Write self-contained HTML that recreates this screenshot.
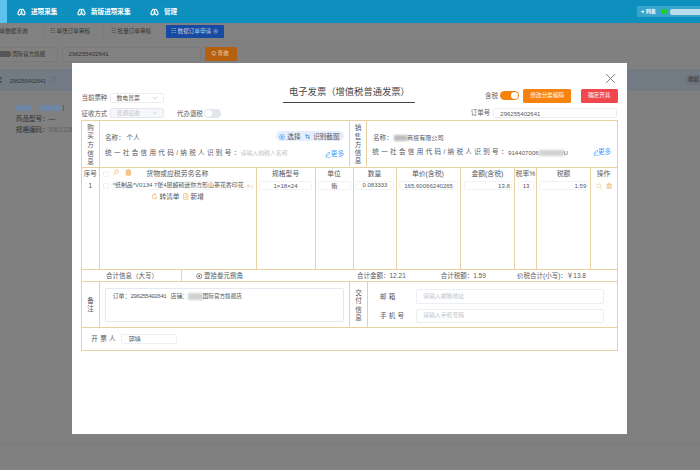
<!DOCTYPE html>
<html lang="zh-CN">
<head>
<meta charset="utf-8">
<title>电子发票</title>
<style>
html,body{margin:0;padding:0;}
body{width:700px;height:470px;overflow:hidden;position:relative;background:#fff;
 font-family:"Liberation Sans","Noto Sans CJK SC",sans-serif;color:#56585c;}
*{box-sizing:border-box;}
.a{position:absolute;}
.t{position:absolute;white-space:nowrap;line-height:1;font-size:6.6px;}
/* header */
#hd{left:0;top:0;width:700px;height:23px;background:#0e90bf;z-index:30;}
#hd .lb{left:0;top:0;width:7px;height:23px;background:#5cc3ef;}
#hd .t{color:#fff;font-weight:bold;font-size:6.6px;}
/* underlying page */
#pg{left:0;top:23px;width:700px;height:447px;background:#808080;overflow:hidden;}
#pg .t{color:#333;font-size:5.6px;}
/* modal */
#md{left:0;top:0;width:700px;height:470px;z-index:20;}
#md .w{left:72px;top:62.5px;width:555px;height:371px;background:#fff;}
.bx{position:absolute;border:1px solid #eaecf0;border-radius:1.5px;background:#fff;}
.vl{position:absolute;width:1px;background:#e7d0a2;}
.hl{position:absolute;height:1px;background:#e7d0a2;}
.v{position:absolute;width:8px;text-align:center;font-size:6.6px;line-height:8.5px;}
.ph{color:#c0c4cc;}
.bl{color:#409eff;}
</style>
</head>
<body>
<!-- ===== top header ===== -->
<div id="hd" class="a">
  <div class="a lb"></div>
  <svg class="a" style="left:17px;top:7.6px" width="9" height="8" viewBox="0 0 9 8"><path d="M2.9 1.3 Q1.3 3.6 0.9 5.2 Q0.9 6.8 2.5 6.8 Q4 6.8 4.1 5.2 L4.5 2.6 L4.9 5.2 Q5 6.8 6.5 6.8 Q8.1 6.8 8.1 5.2 Q7.7 3.6 6.1 1.3 Q5 0.9 4.5 2.4 Q4 0.9 2.9 1.3Z" fill="none" stroke="#fff" stroke-width="1.15" stroke-linejoin="round"/></svg>
  <span class="t" style="left:31px;top:8.9px">进项采集</span>
  <svg class="a" style="left:77px;top:7.6px" width="9" height="8" viewBox="0 0 9 8"><path d="M2.9 1.3 Q1.3 3.6 0.9 5.2 Q0.9 6.8 2.5 6.8 Q4 6.8 4.1 5.2 L4.5 2.6 L4.9 5.2 Q5 6.8 6.5 6.8 Q8.1 6.8 8.1 5.2 Q7.7 3.6 6.1 1.3 Q5 0.9 4.5 2.4 Q4 0.9 2.9 1.3Z" fill="none" stroke="#fff" stroke-width="1.15" stroke-linejoin="round"/></svg>
  <span class="t" style="left:91px;top:8.9px">新版进项采集</span>
  <svg class="a" style="left:149.5px;top:7.6px" width="9" height="8" viewBox="0 0 9 8"><path d="M2.9 1.3 Q1.3 3.6 0.9 5.2 Q0.9 6.8 2.5 6.8 Q4 6.8 4.1 5.2 L4.5 2.6 L4.9 5.2 Q5 6.8 6.5 6.8 Q8.1 6.8 8.1 5.2 Q7.7 3.6 6.1 1.3 Q5 0.9 4.5 2.4 Q4 0.9 2.9 1.3Z" fill="none" stroke="#fff" stroke-width="1.15" stroke-linejoin="round"/></svg>
  <span class="t" style="left:164px;top:8.9px">管理</span>
  <div class="a" style="left:637px;top:5.5px;width:63px;height:11.5px;background:#3ba4cd;"></div>
  <span class="t" style="left:641.3px;top:8.9px;font-size:5px">◂ 列表</span>
  <div class="a" style="left:661.2px;top:8.7px;width:5.6px;height:5.6px;border-radius:3px;background:#19d219;"></div>
  <div class="a" style="left:669.5px;top:8.6px;width:33px;height:6px;border-radius:2px;background:#b9dcea;filter:blur(.5px);"></div>
</div>

<!-- ===== underlying page (dimmed) ===== -->
<div id="pg" class="a">
  <!-- tab strip (coords relative to #pg: y-23) -->
  <div class="a" style="left:0;top:1px;width:700px;height:14.5px;background:#818181;"></div>
  <span class="t" style="left:-6px;top:5.6px">订单数据查询</span>
  <div class="a" style="left:43px;top:3px;width:1px;height:11px;background:#7a7a7a;"></div>
  <span class="t" style="left:50px;top:5.6px">☷ 单张订单审核</span>
  <div class="a" style="left:103px;top:3px;width:1px;height:11px;background:#7a7a7a;"></div>
  <span class="t" style="left:111px;top:5.6px">☷ 批量订单审核</span>
  <div class="a" style="left:166px;top:1.6px;width:57.5px;height:13.7px;background:#164aa3;"></div>
  <span class="t" style="left:171px;top:5.6px;color:#c3cbdc">☷ 数据订单申请 ⊗</span>
  <!-- search row -->
  <div class="a" style="left:-2px;top:24px;width:60.3px;height:14.5px;border:1px solid #7a7a7a;border-radius:2px;background:#818181;"></div>
  <div class="a" style="left:-3px;top:28.4px;width:14px;height:6px;background:#565656;border-radius:2px;filter:blur(.6px);"></div>
  <span class="t" style="left:12.3px;top:28.6px;font-size:5.5px">国际官方旗舰</span>
  <span class="t" style="left:49px;top:29px;color:#6a6a6a;font-size:5px">﹀</span>
  <div class="a" style="left:61.7px;top:24px;width:139.5px;height:14.5px;border:1px solid #7a7a7a;border-radius:2px;background:#818181;"></div>
  <span class="t" style="left:68.6px;top:28.4px;font-size:6px">296255402641</span>
  <div class="a" style="left:205px;top:24px;width:31.5px;height:14px;background:#b5600f;border-radius:1.5px;"></div>
  <span class="t" style="left:211.5px;top:28.2px;color:#ead9c6">Q 查询</span>
  <!-- list header band -->
  <div class="a" style="left:0;top:45.6px;width:700px;height:22.6px;background:#727a84;"></div>
  <span class="t" style="left:-3px;top:55.2px">号</span>
  <span class="t" style="left:9.8px;top:55.6px;font-size:5.4px">296255402641</span>
  <span class="t" style="left:49.5px;top:55px;color:#5b6f8b">❐</span>
  <div class="a" style="left:685px;top:51.5px;width:20px;height:10px;border-radius:5px;background:#6d747d;"></div>
  <span class="t" style="left:688px;top:54px">收起</span>
  <!-- product row -->
  <div class="a" style="left:16px;top:81.6px;width:15.5px;height:6.4px;background:#6f87a4;filter:blur(.7px);"></div>
  <div class="a" style="left:38.5px;top:81.6px;width:23.5px;height:6.4px;background:#6f87a4;filter:blur(.7px);"></div>
  <span class="t" style="left:62px;top:81.6px;font-size:6.4px">）</span>
  <span class="t" style="left:15.8px;top:93px;font-size:6.6px">商品型号：—</span>
  <span class="t" style="left:15.8px;top:104.1px;font-size:6.6px">规格编码：<span style="color:#5f5f5f">6901236</span></span>
  <div class="a" style="left:0;top:418.5px;width:700px;height:5.5px;background:#7e7e7e;"></div>
</div>

<!-- ===== modal ===== -->
<div id="md" class="a">
  <div class="a w"></div>
  <!-- close -->
  <svg class="a" style="left:605px;top:73px" width="11" height="11" viewBox="0 0 11 11"><path d="M1 1 L10 10 M10 1 L1 10" stroke="#777" stroke-width="0.9" fill="none"/></svg>
  <!-- top form -->
  <span class="t" style="left:81.5px;top:95.2px;font-size:6.45px">当前票种</span>
  <div class="bx" style="left:109.5px;top:93.3px;width:54px;height:10px;"></div>
  <span class="t" style="left:116.5px;top:95.7px;font-size:5.85px">数电普票</span>
  <svg class="a" style="left:152px;top:96px" width="6" height="4" viewBox="0 0 6 4"><path d="M0.8 0.8 L3 3 L5.2 0.8" stroke="#c0c4cc" stroke-width="0.7" fill="none"/></svg>
  <span class="t" style="left:81.5px;top:110.6px;font-size:6.45px">征收方式</span>
  <div class="bx" style="left:109.5px;top:108.2px;width:54px;height:10px;background:#f5f7fa;border-color:#e4e7ed"></div>
  <span class="t ph" style="left:116.5px;top:110.9px;font-size:5.85px">普通征收</span>
  <svg class="a" style="left:152px;top:111px" width="6" height="4" viewBox="0 0 6 4"><path d="M0.8 0.8 L3 3 L5.2 0.8" stroke="#c0c4cc" stroke-width="0.7" fill="none"/></svg>
  <span class="t" style="left:177px;top:110.6px;font-size:6.45px">代办退税</span>
  <div class="a" style="left:204px;top:109px;width:17.3px;height:8.6px;border-radius:4.3px;background:#e2e5ec;"></div>
  <div class="a" style="left:205px;top:110px;width:6.6px;height:6.6px;border-radius:3.4px;background:#fff;"></div>
  <!-- title -->
  <span class="t" style="left:289px;top:87.8px;font-size:9.3px;color:#484848">电子发票（增值税普通发票）</span>
  <div class="a" style="left:282.5px;top:102px;width:132px;height:1px;background:#444;"></div>
  <!-- right controls -->
  <span class="t" style="left:485px;top:93.2px;font-size:6.45px">含税</span>
  <div class="a" style="left:500.3px;top:91.1px;width:18.6px;height:9px;border-radius:4.5px;background:#f5820d;"></div>
  <div class="a" style="left:510.6px;top:92.1px;width:7px;height:7px;border-radius:3.5px;background:#fff;"></div>
  <div class="a" style="left:523px;top:88.6px;width:48.3px;height:14px;border-radius:1.5px;background:#f6830e;"></div>
  <span class="t" style="left:530.5px;top:92.9px;font-size:5.6px;color:#fff">修改分类编码</span>
  <div class="a" style="left:581px;top:88.6px;width:36.6px;height:14px;border-radius:1.5px;background:#f0474d;"></div>
  <span class="t" style="left:588px;top:92.9px;font-size:5.6px;color:#fff">确定开具</span>
  <span class="t" style="left:470.8px;top:110.2px;font-size:6.45px">订单号</span>
  <div class="bx" style="left:492.5px;top:107.5px;width:124px;height:10px;"></div>
  <span class="t" style="left:500.3px;top:110.5px;font-size:6px">296255402641</span>

  <!-- ===== invoice table grid ===== -->
  <div class="hl" style="left:81px;top:120px;width:536.7px"></div>
  <div class="hl" style="left:81px;top:166.6px;width:536.7px"></div>
  <div class="hl" style="left:81px;top:269px;width:536.7px"></div>
  <div class="hl" style="left:81px;top:281px;width:536.7px"></div>
  <div class="hl" style="left:81px;top:327px;width:536.7px"></div>
  <div class="hl" style="left:81px;top:349.5px;width:536.7px"></div>
  <div class="vl" style="left:81px;top:120px;height:230px"></div>
  <div class="vl" style="left:616.7px;top:120px;height:230px"></div>
  <div class="vl" style="left:98.6px;top:120px;height:149px"></div>
  <div class="vl" style="left:98.6px;top:281px;height:46px"></div>
  <div class="vl" style="left:349.2px;top:120px;height:46px"></div>
  <div class="vl" style="left:366px;top:120px;height:46px"></div>
  <div class="vl" style="left:349.2px;top:281px;height:46px"></div>
  <div class="vl" style="left:366.6px;top:281px;height:46px"></div>
  <div class="vl" style="left:256px;top:166.6px;height:102.4px"></div>
  <div class="vl" style="left:314.8px;top:166.6px;height:102.4px"></div>
  <div class="vl" style="left:353px;top:166.6px;height:102.4px"></div>
  <div class="vl" style="left:396px;top:166.6px;height:102.4px"></div>
  <div class="vl" style="left:460px;top:166.6px;height:102.4px"></div>
  <div class="vl" style="left:514px;top:166.6px;height:102.4px"></div>
  <div class="vl" style="left:536px;top:166.6px;height:102.4px"></div>
  <div class="vl" style="left:589.8px;top:166.6px;height:102.4px"></div>
  <div class="vl" style="left:181px;top:269px;height:12px"></div>

  <!-- buyer -->
  <div class="v" style="left:86.5px;top:123.5px;line-height:8.7px">购买方信息</div>
  <span class="t" style="left:105px;top:135px">名称： 个人</span>
  <span class="t" style="left:105px;top:150.2px;letter-spacing:2.3px">统一社会信用代码/纳税人识别号：</span>
  <span class="t ph" style="left:240.5px;top:151px;font-size:5.9px">请输入纳税人名称</span>
  <div class="a" style="left:276px;top:131.3px;width:67.5px;height:9.8px;border-radius:4.9px;background:#e6eefb;"></div>
  <svg class="a" style="left:279.2px;top:133.5px" width="6" height="6" viewBox="0 0 6 6"><circle cx="3" cy="3" r="2.4" fill="none" stroke="#409eff" stroke-width="0.7"/><circle cx="3" cy="3" r="0.9" fill="#409eff"/></svg>
  <span class="t" style="left:287.3px;top:133.5px;font-size:6.6px">选择</span>
  <svg class="a" style="left:305.3px;top:134px" width="5.2" height="5.2" viewBox="0 0 6 6"><path d="M1.5 0.3 V4.5 H5.7 M0.3 1.5 H4.5 V5.7" fill="none" stroke="#3a8ee6" stroke-width="0.8"/></svg>
  <span class="t" style="left:313.2px;top:133.5px;font-size:6.6px">识别截图</span>
  <svg class="a" style="left:324.9px;top:150.5px" width="6" height="7" viewBox="0 0 6 7"><path d="M1 5.2 L1.3 3.8 L4 1 L5 2 L2.3 4.8 Z M0.6 6.3 H5.4" fill="none" stroke="#409eff" stroke-width="0.6"/></svg>
  <span class="t bl" style="left:330.8px;top:150.7px">更多</span>
  <!-- seller -->
  <div class="v" style="left:354px;top:124.4px;line-height:8.2px">销售方信息</div>
  <span class="t" style="left:373px;top:135px">名称：</span>
  <div class="a" style="left:394.3px;top:134.6px;width:12.7px;height:6px;background:#bdbdbd;filter:blur(.8px);"></div>
  <span class="t" style="left:407px;top:134.5px;font-size:6.1px">商贸有限公司</span>
  <span class="t" style="left:372.3px;top:149.1px;letter-spacing:2.3px">统一社会信用代码/纳税人识别号：</span>
  <span class="t" style="left:508px;top:149.9px;font-size:6.15px">914407006</span>
  <div class="a" style="left:538.6px;top:149.6px;width:25px;height:6.2px;background:#d2d2d2;filter:blur(.8px);"></div>
  <span class="t" style="left:563.6px;top:149.9px;font-size:6.15px">U</span>
  <svg class="a" style="left:592.5px;top:148.6px" width="6" height="7" viewBox="0 0 6 7"><path d="M1 5.2 L1.3 3.8 L4 1 L5 2 L2.3 4.8 Z M0.6 6.3 H5.4" fill="none" stroke="#409eff" stroke-width="0.6"/></svg>
  <span class="t bl" style="left:598px;top:148.7px">更多</span>

  <!-- items header -->
  <span class="t" style="left:83.7px;top:171px">序号</span>
  <div class="bx" style="left:102.8px;top:170.8px;width:5.8px;height:5.8px;border-radius:1px;border-color:#eff0f3"></div>
  <svg class="a" style="left:113.2px;top:169.3px" width="6.2" height="6.2" viewBox="0 0 7 7"><circle cx="4" cy="2.9" r="2" fill="none" stroke="#f1c080" stroke-width="0.9"/><path d="M2.6 4.4 L0.8 6.3" stroke="#f1c080" stroke-width="1"/></svg>
  <svg class="a" style="left:124.6px;top:168.9px" width="6.8" height="6.8" viewBox="0 0 7 7"><path d="M1.4 1.8 V6.4 H5.6 V1.8Z" fill="#f6d3a2"/><path d="M0.8 1.6 H6.2 M2.6 1.4 V0.6 H4.4 V1.4 M1.4 1.8 V6.4 H5.6 V1.8 M2.8 2.8 V5.4 M4.2 2.8 V5.4" fill="none" stroke="#efb566" stroke-width="0.8"/></svg>
  <span class="t" style="left:146.3px;top:171px;font-size:6.9px">货物或应税劳务名称</span>
  <span class="t" style="left:272px;top:171px;font-size:6.8px">规格型号</span>
  <span class="t" style="left:327.2px;top:171px;font-size:6.8px">单位</span>
  <span class="t" style="left:367.8px;top:171px;font-size:6.8px">数量</span>
  <span class="t" style="left:412px;top:171px;font-size:6.8px">单价(含税)</span>
  <span class="t" style="left:471.5px;top:171px;font-size:6.8px">金额(含税)</span>
  <span class="t" style="left:515.6px;top:171px;font-size:6.8px">税率%</span>
  <span class="t" style="left:556.8px;top:171px;font-size:6.8px">税额</span>
  <span class="t" style="left:596.8px;top:171px;font-size:6.8px">操作</span>
  <!-- item row 1 -->
  <span class="t" style="left:88.4px;top:182.6px;font-size:6.6px">1</span>
  <div class="bx" style="left:102.8px;top:182.8px;width:5.8px;height:5.8px;border-radius:1px;border-color:#eff0f3"></div>
  <div class="bx" style="left:110.5px;top:181px;width:143.5px;height:9.4px;border-color:#f6f7f9"></div>
  <span class="t" style="left:112.7px;top:183.2px;font-size:5.95px">*纸制品*V0134 7张4层超韧迷你方形山茶花香印花</span>
  <svg class="a" style="left:246.2px;top:182.6px" width="7" height="6" viewBox="0 0 7 6"><path d="M0.5 3 L2.5 1 V2.3 H4 V3.7 H2.5 V5 Z M4.6 4.6 L6.4 1.2 V4.6Z" fill="#f5d9b0"/></svg>
  <svg class="a" style="left:151.2px;top:193.3px" width="7" height="7" viewBox="0 0 7 7"><path d="M5.8 3.5 A2.3 2.3 0 1 1 4.6 1.5 M3.9 0.5 L5 1.6 L3.7 2.5" fill="none" stroke="#efb566" stroke-width="0.8"/></svg>
  <span class="t" style="left:159.5px;top:194px;font-size:6.7px">转清单</span>
  <svg class="a" style="left:183.1px;top:193.4px" width="5.6" height="6.8" viewBox="0 0 6 7.4"><path d="M0.6 0.5 H3.8 L5.4 2.1 V6.9 H0.6 Z M3.7 0.6 V2.2 H5.3 M1.8 4.4 H4.2 M3 3.2 V5.6" fill="none" stroke="#efb566" stroke-width="0.7"/></svg>
  <span class="t" style="left:190.6px;top:194px;font-size:6.7px">新增</span>
  <div class="bx" style="left:259px;top:181px;width:53px;height:9.4px;border-color:#f1f2f5"></div>
  <span class="t" style="left:259px;top:183px;width:53px;text-align:center;font-size:6.1px">1×18×24</span>
  <div class="bx" style="left:317.7px;top:181px;width:33px;height:9.4px;border-color:#f1f2f5"></div>
  <span class="t" style="left:317.7px;top:182.7px;width:33px;text-align:center;font-size:6px">箱</span>
  <div class="bx" style="left:356.4px;top:181px;width:37.2px;height:9.4px;border-color:#f1f2f5"></div>
  <span class="t" style="left:356.4px;top:183px;width:37.2px;text-align:center;font-size:5.95px">0.083333</span>
  <div class="bx" style="left:399.3px;top:181px;width:58.6px;height:9.4px;border-color:#f1f2f5"></div>
  <span class="t" style="left:399.3px;top:183px;width:58.6px;text-align:center;font-size:6.05px">165.60066240265</span>
  <div class="bx" style="left:463.6px;top:181px;width:48.4px;height:9.4px;border-color:#f1f2f5"></div>
  <span class="t" style="left:463.6px;top:182.8px;width:46.4px;text-align:right;font-size:6.1px">13.8</span>
  <div class="bx" style="left:517.9px;top:181px;width:16.3px;height:9.4px;border-color:#f1f2f5"></div>
  <span class="t" style="left:517.9px;top:182.8px;width:16.3px;text-align:center;font-size:6.1px">13</span>
  <div class="bx" style="left:539.3px;top:181px;width:48.6px;height:9.4px;border-color:#f1f2f5"></div>
  <span class="t" style="left:539.3px;top:182.8px;width:47px;text-align:right;font-size:6.1px">1.59</span>
  <svg class="a" style="left:596px;top:182.6px" width="6.5" height="6.5" viewBox="0 0 7 7"><circle cx="3" cy="3" r="2" fill="none" stroke="#f3cf9c" stroke-width="0.8"/><path d="M4.5 4.5 L6.2 6.2" stroke="#f3cf9c" stroke-width="0.9"/></svg>
  <svg class="a" style="left:606px;top:182.6px" width="6.4" height="6.4" viewBox="0 0 7 7"><path d="M0.8 1.6 H6.2 M2.6 1.4 V0.6 H4.4 V1.4 M1.4 1.8 V6.4 H5.6 V1.8 M2.8 2.8 V5.4 M4.2 2.8 V5.4" fill="none" stroke="#efb566" stroke-width="0.8"/></svg>

  <!-- totals -->
  <span class="t" style="left:106px;top:273.1px;font-size:6.5px">合计信息（大写）</span>
  <svg class="a" style="left:196px;top:273px" width="6.4" height="6.4" viewBox="0 0 6 6"><circle cx="3" cy="3" r="2.4" fill="none" stroke="#555" stroke-width="0.6"/><circle cx="3" cy="3" r="0.9" fill="#555"/></svg>
  <span class="t" style="left:204.1px;top:273.2px;font-size:6.5px">壹拾叁元捌角</span>
  <span class="t" style="left:357px;top:273px;font-size:6.5px">合计金额：12.21</span>
  <span class="t" style="left:440.7px;top:273px;font-size:6.5px">合计税额：1.59</span>
  <span class="t" style="left:517px;top:273px;font-size:6.5px">价税合计(小写)：￥13.8</span>
  <!-- remarks -->
  <div class="v" style="left:86.5px;top:297.2px;line-height:8px">备注</div>
  <div class="bx" style="left:105px;top:288.3px;width:238.7px;height:33.7px;border-color:#e3e9f2;border-radius:2px"></div>
  <span class="t" style="left:112.7px;top:293.6px;font-size:5.9px">订单：</span>
  <span class="t" style="left:130.5px;top:293.7px;font-size:5.9px;letter-spacing:-0.56px;font-family:'Liberation Mono',monospace">296255402641</span>
  <span class="t" style="left:170.6px;top:293.6px;font-size:5.9px">店铺：</span>
  <div class="a" style="left:188.4px;top:293.4px;width:14.3px;height:6.6px;background:#d0d0d0;filter:blur(.8px);"></div>
  <span class="t" style="left:202.7px;top:293.9px;font-size:5.6px">国际官方旗舰店</span>
  <!-- delivery -->
  <div class="v" style="left:354.6px;top:288.7px;line-height:8.4px">交付信息</div>
  <span class="t" style="left:380px;top:293.9px;letter-spacing:2.2px">邮箱</span>
  <div class="bx" style="left:415.7px;top:289.3px;width:188.6px;height:14.3px;border-radius:2px;border-color:#eceef2"></div>
  <span class="t ph" style="left:423px;top:293.6px;font-size:5.9px">请输入邮箱地址</span>
  <span class="t" style="left:380px;top:313.4px;letter-spacing:2.2px">手机号</span>
  <div class="bx" style="left:415.7px;top:308.6px;width:188.6px;height:14.3px;border-radius:2px;border-color:#eceef2"></div>
  <span class="t ph" style="left:423px;top:313.3px;font-size:5.9px">请输入手机号码</span>
  <!-- drawer -->
  <span class="t" style="left:91.3px;top:335.9px;letter-spacing:2.3px">开票人</span>
  <div class="bx" style="left:121.3px;top:333.6px;width:55.7px;height:10px;border-color:#eceef2"></div>
  <span class="t" style="left:128.4px;top:335.6px;font-size:6.2px">郭靖</span>
</div>
</body>
</html>
